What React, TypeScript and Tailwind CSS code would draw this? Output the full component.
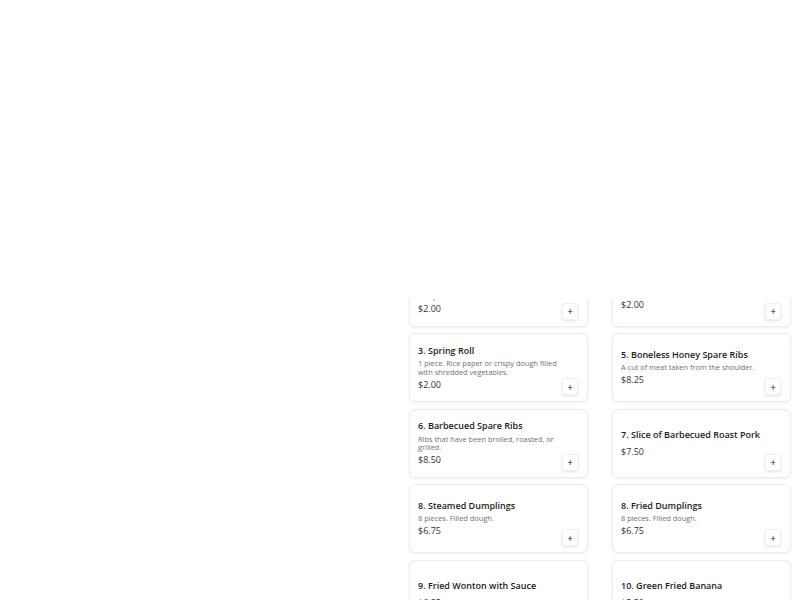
import React from "react";

interface MenuItem {
  title: string;
  description: string;
  price: string;
}

const items: MenuItem[] = [
  { title: "1. Egg Roll", description: "1 piece. Deep fried roll filled with cabbage and pork.", price: "$2.00" },
  { title: "2. Vegetable Egg Roll", description: "1 piece. Deep fried vegetable roll.", price: "$2.00" },
  { title: "3. Spring Roll", description: "1 piece. Rice paper or crispy dough filled with shredded vegetables.", price: "$2.00" },
  { title: "5. Boneless Honey Spare Ribs", description: "A cut of meat taken from the shoulder.", price: "$8.25" },
  { title: "6. Barbecued Spare Ribs", description: "Ribs that have been broiled, roasted, or grilled.", price: "$8.50" },
  { title: "7. Slice of Barbecued Roast Pork", description: "", price: "$7.50" },
  { title: "8. Steamed Dumplings", description: "8 pieces. Filled dough.", price: "$6.75" },
  { title: "8. Fried Dumplings", description: "8 pieces. Filled dough.", price: "$6.75" },
  { title: "9. Fried Wonton with Sauce", description: "", price: "$6.25" },
  { title: "10. Green Fried Banana", description: "", price: "$5.50" },
];

const MenuCard: React.FC<{ item: MenuItem }> = ({ item }) => (
  <div className="flex h-[69px] items-center rounded-md border border-[#ececec] bg-white pl-[8px] pr-[9px] shadow-[0_1px_3px_rgba(0,0,0,0.06)]">
    <div className="flex min-w-0 flex-1 flex-col">
      <h3 className="mb-[2.5px] text-[9px] leading-[12px] font-semibold text-[#1c1c1c]">{item.title}</h3>
      <p className="mb-[2.5px] text-[7.4px] leading-[8.5px] text-[#707070]">{item.description}</p>
      <span className="text-[9px] leading-[12px] text-[#333]">{item.price}</span>
    </div>
    <button className="mb-[-38px] flex h-[17px] w-[16px] shrink-0 items-center justify-center self-center rounded-[3px] border border-[#f0f0f0] bg-white text-[10px] leading-none text-[#222] shadow-[0_1px_3px_rgba(0,0,0,0.12)]">
      +
    </button>
  </div>
);

export default function App() {
  return (
    <div className="flex h-[600px] w-[800px] bg-white font-['Open_Sans',sans-serif]">
      <div className="w-[400px]" />
      <div className="flex w-[400px] flex-col">
        <div className="h-[299px]" />
        <div className="h-[301px] overflow-hidden px-[9px]">
          <div className="mt-[-41.5px] grid grid-cols-2 gap-x-[24px] gap-y-[6.5px]">
            {items.map((item) => (
              <MenuCard key={item.title} item={item} />
            ))}
          </div>
        </div>
      </div>
    </div>
  );
}
